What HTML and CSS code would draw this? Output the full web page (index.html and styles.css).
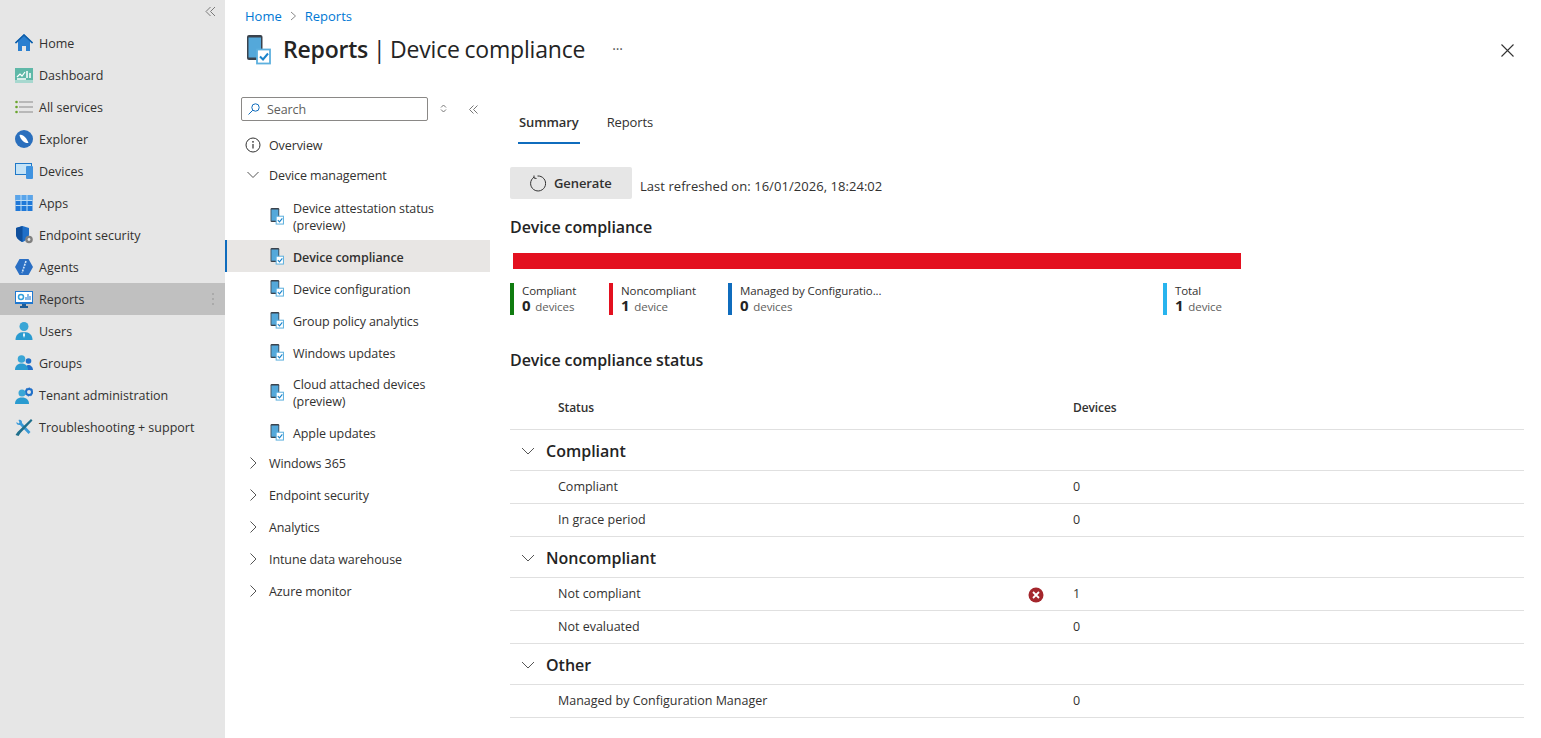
FILE: index.html
```html
<!DOCTYPE html>
<html lang="en">
<head>
  <meta charset="UTF-8" />
  <title>Reports | Device compliance</title>
  <link rel="stylesheet" href="styles.css">
</head>
<body>
  <svg class="defs" width="0" height="0">
    <symbol id="device" viewBox="0 0 25 30">
      <rect x="1" y="0" width="15.500" height="25" rx="2" fill="#3a424c"/>
      <rect x="2.500" y="2.500" width="12.500" height="20" fill="#54a8da"/>
      <rect x="11" y="14.500" width="13" height="14" fill="#fff" stroke="#5cb0de" stroke-width="1.800"/>
      <path d="M14 21.500l3 3 5-6" fill="none" stroke="#1a84cc" stroke-width="2"/>
    </symbol>
  </svg>

  <div class="app">
    <nav class="sidebar">
      <div class="collapse-row">
        <svg width="11" height="11" viewBox="0 0 11 11"><path d="M5.500 1L1 5.500l4.500 4.500M10 1L5.500 5.500l4.500 4.500" fill="none" stroke="#7a7a7a" stroke-width="1"/></svg>
      </div>
      <a class="side-item">
        <svg width="18" height="18" viewBox="0 0 18 18"><path d="M9 0L0 8.500l1 1L3 7.700V17h4v-5h4v5h4V7.700l2 1.800 1-1z" fill="#2a7fd0"/><path d="M9 0L0 8.500l1 1L9 2l8 7.500 1-1z" fill="#0f5ea8"/></svg>
        Home
      </a>
      <a class="side-item">
        <svg width="18" height="15" viewBox="0 0 18 15"><rect width="18" height="15" fill="#5fb8a8"/><rect y="12" width="18" height="3" fill="#a7d8cf"/><path d="M2 9l3-3 2 2 3-4" fill="none" stroke="#fff" stroke-width="1.200"/><path d="M12 10V3M15 10V5M2 11h9" stroke="#fff" stroke-width="1.500"/></svg>
        Dashboard
      </a>
      <a class="side-item">
        <svg width="18" height="14" viewBox="0 0 18 14"><path d="M4 2h14M4 7h14M4 12h14" stroke="#8a8a8a" stroke-width="1.200"/><circle cx="1.500" cy="2" r="1.300" fill="#6aa52d"/><circle cx="1.500" cy="7" r="1.300" fill="#6aa52d"/><circle cx="1.500" cy="12" r="1.300" fill="#6aa52d"/></svg>
        All services
      </a>
      <a class="side-item">
        <svg width="18" height="18" viewBox="0 0 18 18"><circle cx="9" cy="9" r="9" fill="#2a6fbd"/><path d="M4.500 5c3-1.500 7 2.500 9 8-4 .5-8-3-9-8z" fill="#fff"/></svg>
        Explorer
      </a>
      <a class="side-item">
        <svg width="18" height="16" viewBox="0 0 18 16"><rect x=".5" y=".5" width="16" height="11" fill="#c5e3f6" stroke="#1f78c8"/><rect x="11" y="3" width="7" height="13" rx="1" fill="#3f93e0"/></svg>
        Devices
      </a>
      <a class="side-item">
        <svg width="17" height="16" viewBox="0 0 17 16"><rect width="17" height="16" fill="#1f78d8"/><rect width="17" height="5" fill="#5aa5ea"/><rect y="5" width="17" height="1" fill="#bcdcf5"/><rect y="10" width="17" height="1" fill="#bcdcf5"/><rect x="5" width="1" height="16" fill="#bcdcf5"/><rect x="11" width="1" height="16" fill="#bcdcf5"/></svg>
        Apps
      </a>
      <a class="side-item">
        <svg width="18" height="18" viewBox="0 0 18 18"><path d="M7.500 0L14 2v6c0 4-3 6.500-6.500 8C4 14.500 1 12 1 8V2z" fill="#1f6fc8"/><path d="M7.500 0v16C4 14.500 1 12 1 8V2z" fill="#0f4f9c"/><circle cx="14" cy="13.500" r="3.800" fill="#808080"/><circle cx="14" cy="13.500" r="1.400" fill="#e6e6e6"/></svg>
        Endpoint security
      </a>
      <a class="side-item">
        <svg width="18" height="16" viewBox="0 0 18 16"><path d="M4.500 0h9L18 8l-4.500 8h-9L0 8z" fill="#2a6fc4"/><path d="M11 2L7 14" stroke="#cfe4f7" stroke-width="1.600" stroke-dasharray="2 1"/></svg>
        Agents
      </a>
      <a class="side-item is-active">
        <svg width="18" height="17" viewBox="0 0 18 17"><rect width="18" height="13" fill="#1f78d0"/><rect x="1" y="1" width="16" height="10" fill="#fff"/><circle cx="6" cy="6" r="2.500" fill="none" stroke="#33a0dc" stroke-width="1.500"/><path d="M11 9V6M13 9V3M15 9V5" stroke="#3a8ad8" stroke-width="1.200"/><path d="M7 13h4v2H7zM5 15h8v2H5z" fill="#1d5c96"/></svg>
        Reports
        <span class="grip"></span>
      </a>
      <a class="side-item">
        <svg width="17" height="18" viewBox="0 0 17 18"><circle cx="8.500" cy="4.500" r="4.500" fill="#3aa6d6"/><path d="M0 18c0-5 3-8 8.500-8S17 13 17 18z" fill="#2a9bd0"/><path d="M8.500 10l-1 3 1 3 1-3z" fill="#fff"/></svg>
        Users
      </a>
      <a class="side-item">
        <svg width="18" height="16" viewBox="0 0 18 16"><circle cx="13.500" cy="6" r="2.800" fill="#1f6fc8"/><path d="M10 15c0-3 1.500-5 3.500-5s4.500 2 4.500 5z" fill="#1f6fc8"/><circle cx="6.500" cy="4" r="3.800" fill="#3aa6d6"/><path d="M0 15c0-4 2.500-6.500 6.500-6.500S13 11 13 15z" fill="#2a9bd0"/></svg>
        Groups
      </a>
      <a class="side-item">
        <svg width="18" height="17" viewBox="0 0 18 17"><circle cx="14" cy="5" r="3" fill="none" stroke="#1f6fc8" stroke-width="2"/><circle cx="14" cy="5" r="4" fill="none" stroke="#1f6fc8" stroke-width="1" stroke-dasharray="1.500 1.500"/><circle cx="7" cy="6" r="3.500" fill="#3aa6d6"/><path d="M0 17c0-4 2.500-6.500 7-6.500s7 2.500 7 6.500z" fill="#2a9bd0"/></svg>
        Tenant administration
      </a>
      <a class="side-item">
        <svg width="17" height="17" viewBox="0 0 17 17"><path d="M3 1c2-1 4 1 3.500 3L15 13l-2 2-8.500-9C2.500 6.500.500 5 1 3l2 1.500 1-1z" fill="#3a9ad8"/><path d="M15.500 0L17 1.500 5 14l-2 3-3-1 2-3z" fill="#1f6f8c"/></svg>
        Troubleshooting + support
      </a>
    </nav>

    <main class="main">
      <div class="breadcrumb">
        <a>Home</a>
        <svg width="7" height="10" viewBox="0 0 7 10"><path d="M1 1l4.500 4L1 9" fill="none" stroke="#8a8a8a"/></svg>
        <a>Reports</a>
      </div>

      <header class="page-head">
        <svg class="head-icon" width="25" height="30"><use href="#device"/></svg>
        <h1><b>Reports</b> | Device compliance</h1>
        <span class="more">···</span>
        <svg class="close" width="13" height="13" viewBox="0 0 13 13"><path d="M.500.500l12 12M12.500.500l-12 12" stroke="#333" stroke-width="1.100"/></svg>
      </header>

      <div class="blade">
        <aside class="menu">
          <div class="search-row">
            <div class="search">
              <svg width="12" height="12" viewBox="0 0 12 12"><circle cx="7.500" cy="4.500" r="3.700" fill="none" stroke="#0f6cbd"/><path d="M4.800 7.200L.500 11.500" stroke="#0f6cbd"/></svg>
              Search
            </div>
            <svg class="sort" width="7" height="9" viewBox="0 0 7 9"><path d="M1 3.500L3.500 1 6 3.500M1 5.500L3.500 8 6 5.500" fill="none" stroke="#777"/></svg>
            <svg class="fold" width="9" height="9" viewBox="0 0 9 9"><path d="M4.500.500L.500 4.500l4 4M8.500.500l-4 4 4 4" fill="none" stroke="#777"/></svg>
          </div>

          <a class="tree-row overview">
            <svg class="twist" width="16" height="16" viewBox="0 0 16 16"><circle cx="8" cy="8" r="7" fill="none" stroke="#333"/><path d="M8 7v4.500" stroke="#333" stroke-width="1.200"/><circle cx="8" cy="4.800" r=".9" fill="#333"/></svg>
            Overview
          </a>
          <a class="tree-row parent open">
            <svg class="twist" width="16" height="16" viewBox="0 0 16 16"><path d="M2.500 5l5.500 5.500L13.500 5" fill="none" stroke="#555"/></svg>
            Device management
          </a>
          <div class="children">
            <a class="child tall"><svg width="14" height="17"><use href="#device"/></svg><span>Device attestation status<br>(preview)</span></a>
            <a class="child selected"><svg width="14" height="17"><use href="#device"/></svg><span>Device compliance</span></a>
            <a class="child"><svg width="14" height="17"><use href="#device"/></svg><span>Device configuration</span></a>
            <a class="child"><svg width="14" height="17"><use href="#device"/></svg><span>Group policy analytics</span></a>
            <a class="child"><svg width="14" height="17"><use href="#device"/></svg><span>Windows updates</span></a>
            <a class="child tall"><svg width="14" height="17"><use href="#device"/></svg><span>Cloud attached devices<br>(preview)</span></a>
            <a class="child"><svg width="14" height="17"><use href="#device"/></svg><span>Apple updates</span></a>
          </div>
          <a class="tree-row parent"><svg class="twist" width="16" height="16" viewBox="0 0 16 16"><path d="M5.500 2.500L11 8l-5.500 5.500" fill="none" stroke="#555"/></svg>Windows 365</a>
          <a class="tree-row parent"><svg class="twist" width="16" height="16" viewBox="0 0 16 16"><path d="M5.500 2.500L11 8l-5.500 5.500" fill="none" stroke="#555"/></svg>Endpoint security</a>
          <a class="tree-row parent"><svg class="twist" width="16" height="16" viewBox="0 0 16 16"><path d="M5.500 2.500L11 8l-5.500 5.500" fill="none" stroke="#555"/></svg>Analytics</a>
          <a class="tree-row parent"><svg class="twist" width="16" height="16" viewBox="0 0 16 16"><path d="M5.500 2.500L11 8l-5.500 5.500" fill="none" stroke="#555"/></svg>Intune data warehouse</a>
          <a class="tree-row parent"><svg class="twist" width="16" height="16" viewBox="0 0 16 16"><path d="M5.500 2.500L11 8l-5.500 5.500" fill="none" stroke="#555"/></svg>Azure monitor</a>
        </aside>

        <section class="content">
          <div class="tabs">
            <a class="tab current">Summary</a>
            <a class="tab">Reports</a>
          </div>

          <div class="toolbar">
            <button class="generate">
              <svg width="17" height="17" viewBox="0 0 17 17"><path d="M5 2.200A7.500 7.500 0 1 0 8.500 1M5 .500v2.500l2.500.500" fill="none" stroke="#333"/></svg>
              Generate
            </button>
            <span class="refreshed">Last refreshed on: 16/01/2026, 18:24:02</span>
          </div>

          <h2 class="chart-title">Device compliance</h2>
          <div class="bar"></div>

          <div class="legend">
            <div class="legend-item green"><span class="legend-label">Compliant</span><span class="legend-value"><b>0</b> devices</span></div>
            <div class="legend-item red"><span class="legend-label">Noncompliant</span><span class="legend-value"><b>1</b> device</span></div>
            <div class="legend-item blue"><span class="legend-label">Managed by Configuratio...</span><span class="legend-value"><b>0</b> devices</span></div>
            <div class="legend-item cyan"><span class="legend-label">Total</span><span class="legend-value"><b>1</b> device</span></div>
          </div>

          <h2 class="status-title">Device compliance status</h2>

          <div class="grid">
            <div class="grid-head"><span class="col-name">Status</span><span class="col-count">Devices</span></div>

            <div class="group"><svg width="16" height="16" viewBox="0 0 16 16"><path d="M2 5l6 6 6-6" fill="none" stroke="#555"/></svg>Compliant</div>
            <div class="grid-row"><span class="col-name">Compliant</span><span class="col-count">0</span></div>
            <div class="grid-row"><span class="col-name">In grace period</span><span class="col-count">0</span></div>

            <div class="group"><svg width="16" height="16" viewBox="0 0 16 16"><path d="M2 5l6 6 6-6" fill="none" stroke="#555"/></svg>Noncompliant</div>
            <div class="grid-row">
              <span class="col-name">Not compliant</span>
              <svg class="err" width="16" height="16" viewBox="0 0 16 16"><circle cx="8" cy="8" r="7.500" fill="#a4262c"/><path d="M5 5l6 6M11 5l-6 6" stroke="#fff" stroke-width="1.800"/></svg>
              <span class="col-count">1</span>
            </div>
            <div class="grid-row"><span class="col-name">Not evaluated</span><span class="col-count">0</span></div>

            <div class="group"><svg width="16" height="16" viewBox="0 0 16 16"><path d="M2 5l6 6 6-6" fill="none" stroke="#555"/></svg>Other</div>
            <div class="grid-row"><span class="col-name">Managed by Configuration Manager</span><span class="col-count">0</span></div>
          </div>
        </section>
      </div>
    </main>
  </div>
</body>
</html>
```

FILE: styles.css
```css
html, body {
  margin: 0;
  padding: 0;
  height: 100%;
  overflow: hidden;
  font-family: "Open Sans", "Noto Sans", sans-serif;
  font-size: 12.5px;
  letter-spacing: -0.1px;
  color: #323130;
  background: #fff;
}

.defs {
  position: absolute;
}

svg {
  display: block;
  flex: none;
}

.app {
  display: flex;
  height: 738px;
}

/* left navigation */
.sidebar {
  width: 225px;
  flex: none;
  background: #e6e6e6;
}

.collapse-row {
  display: flex;
  justify-content: flex-end;
  height: 27px;
  padding: 6px 9px 0 0;
  box-sizing: border-box;
}

.side-item {
  position: relative;
  display: flex;
  align-items: center;
  gap: 6px;
  height: 32px;
  padding-left: 15px;
  letter-spacing: 0;
}

.side-item svg {
  width: 18px;
}

.side-item.is-active {
  background: #c0c0c0;
}

.grip {
  position: absolute;
  right: 11px;
  top: 10px;
  width: 2px;
  height: 12px;
  background: repeating-linear-gradient(#aaa 0 2px, transparent 2px 5px);
}

/* main area */
.main {
  flex: 1;
  min-width: 0;
}

.breadcrumb {
  display: flex;
  align-items: center;
  gap: 8px;
  height: 32px;
  padding-left: 20px;
  font-size: 13px;
  letter-spacing: 0;
  color: #0078d4;
}

.page-head {
  display: flex;
  align-items: center;
  height: 36px;
  padding-left: 21px;
}

.page-head h1 {
  margin: 0 0 3px 12px;
  font-size: 23px;
  font-weight: 400;
  letter-spacing: -0.2px;
  word-spacing: -1px;
  color: #242424;
}

.page-head h1 b {
  font-weight: 600;
}

.more {
  margin: 0 0 3px 27px;
  font-size: 14px;
  color: #555;
}

.close {
  margin: 0 27px 0 auto;
}

.blade {
  display: flex;
  margin-top: -4px;
  padding-top: 33px;
}

.menu {
  width: 265px;
  flex: none;
}

.search-row {
  display: flex;
  align-items: center;
  height: 24px;
  padding-left: 16px;
  margin-bottom: 9px;
}

.search {
  display: flex;
  align-items: center;
  gap: 7px;
  width: 187px;
  height: 24px;
  box-sizing: border-box;
  padding-left: 6px;
  border: 1px solid #8a8886;
  border-radius: 2px;
  color: #605e5c;
}

.sort {
  margin: -2px 0 0 12px;
}

.fold {
  margin-left: 22px;
}

.tree-row {
  display: flex;
  align-items: center;
  gap: 8px;
  height: 30px;
  padding-left: 20px;
}

.children {
  margin: 2px 0 -1px;
}

.tree-row.parent:not(.open) {
  height: 32px;
}

.child {
  display: flex;
  align-items: center;
  gap: 9px;
  height: 32px;
  padding-left: 45px;
  line-height: 17px;
}

.child span {
  padding-top: 2px;
}

.child.tall {
  height: 48px;
}

.child.selected {
  padding-left: 43px;
  border-left: 2px solid #0f6cbd;
  background: #e8e6e4;
  font-weight: 600;
}

/* right content */
.content {
  flex: 1;
  min-width: 0;
  padding: 0 17px 0 20px;
}

.tabs {
  display: flex;
  gap: 26px;
  height: 47px;
  padding-left: 8px;
  box-sizing: border-box;
}

.tab {
  position: relative;
  padding: 16px 1px 0;
  font-size: 13px;
}

.tab.current {
  font-weight: 600;
  border-bottom: 2px solid #0f6cbd;
}

.toolbar {
  display: flex;
  gap: 8px;
  margin-top: 23px;
  height: 32px;
}

.generate {
  display: flex;
  align-items: center;
  gap: 8px;
  width: 122px;
  height: 32px;
  padding: 0 0 0 19px;
  border: none;
  border-radius: 2px;
  background: #e6e6e6;
  font: inherit;
  font-size: 13px;
  font-weight: 600;
  letter-spacing: inherit;
  color: #323130;
}

.refreshed {
  padding-top: 10px;
  font-size: 13px;
  letter-spacing: 0.05px;
}

h2 {
  margin: 0;
  font-size: 16px;
  font-weight: 600;
  letter-spacing: -0.1px;
  color: #242424;
}

.chart-title {
  margin-top: 17px;
  line-height: 22px;
}

.bar {
  width: 728px;
  height: 16px;
  margin: 15px 0 14px 3px;
  background: #e3101f;
}

.legend {
  display: flex;
  height: 32px;
}

.legend-item {
  display: flex;
  flex-direction: column;
  box-sizing: border-box;
  height: 32px;
  padding-left: 8px;
  border-left: 4px solid;
  font-size: 11.500px;
  line-height: 15px;
}

.legend-item.green { width: 99px; border-color: #107c10; }
.legend-item.red { width: 119px; border-color: #e3101f; }
.legend-item.blue { width: 435px; border-color: #0f6cbd; }
.legend-item.cyan { border-color: #28b4ee; }

.legend-value b {
  font-size: 15px;
  font-weight: 700;
  color: #242424;
  margin-right: 2px;
}

.legend-value {
  color: #605e5c;
}

.status-title {
  margin-top: 34px;
  line-height: 22px;
}

.grid {
  margin-top: 14px;
}

.grid-head {
  position: relative;
  display: flex;
  align-items: center;
  height: 45px;
  border-bottom: 1px solid #e0e0e0;
  box-sizing: border-box;
  font-weight: 600;
  font-size: 12px;
}

.col-name {
  padding-left: 48px;
  width: 515px;
  box-sizing: border-box;
  flex: none;
}

.col-count {
  margin-left: 48px;
  position: absolute;
  left: 515px;
}

.group {
  display: flex;
  align-items: center;
  gap: 10px;
  height: 41px;
  box-sizing: border-box;
  padding: 1px 0 0 10px;
  border-bottom: 1px solid #e0e0e0;
  font-size: 16px;
  font-weight: 600;
  letter-spacing: 0;
  color: #242424;
}

.grid-row {
  position: relative;
  display: flex;
  align-items: center;
  height: 33px;
  box-sizing: border-box;
  padding-bottom: 2px;
  border-bottom: 1px solid #e0e0e0;
  letter-spacing: 0;
}

.err {
  position: absolute;
  left: 518px;
  top: 9px;
}
```
